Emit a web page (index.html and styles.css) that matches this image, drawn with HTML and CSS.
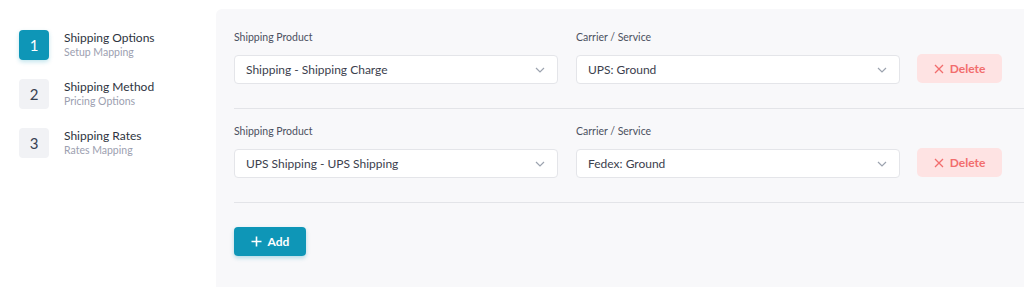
FILE: index.html
```html
<!DOCTYPE html>
<html lang="en">
<head>
    <meta charset="UTF-8">
    <meta name="viewport" content="width=device-width, initial-scale=1.0">
    <title>Shipping Options</title>
    <link rel="stylesheet" href="styles.css">
</head>
<body>
    <div class="layout">
        <!-- Steps -->
        <div class="steps">
            <div class="step active">
                <div class="step-num">1</div>
                <div class="step-text">
                    <div class="step-title">Shipping Options</div>
                    <div class="step-sub">Setup Mapping</div>
                </div>
            </div>
            <div class="step">
                <div class="step-num">2</div>
                <div class="step-text">
                    <div class="step-title">Shipping Method</div>
                    <div class="step-sub">Pricing Options</div>
                </div>
            </div>
            <div class="step">
                <div class="step-num">3</div>
                <div class="step-text">
                    <div class="step-title">Shipping Rates</div>
                    <div class="step-sub">Rates Mapping</div>
                </div>
            </div>
        </div>

        <!-- Mapping rows -->
        <div class="panel">
            <div class="map-row">
                <div class="field">
                    <label>Shipping Product</label>
                    <div class="select">
                        <span>Shipping - Shipping Charge</span>
                        <svg class="chevron" width="10" height="6" viewBox="0 0 10 6"><path d="M1 1l4 4 4-4" fill="none" stroke="#9ca3af" stroke-width="1.2"/></svg>
                    </div>
                </div>
                <div class="field">
                    <label>Carrier / Service</label>
                    <div class="select">
                        <span>UPS: Ground</span>
                        <svg class="chevron" width="10" height="6" viewBox="0 0 10 6"><path d="M1 1l4 4 4-4" fill="none" stroke="#9ca3af" stroke-width="1.2"/></svg>
                    </div>
                </div>
                <button class="btn-delete">
                    <svg width="10" height="10" viewBox="0 0 10 10"><path d="M1 1l8 8M9 1l-8 8" stroke="#f26d6d" stroke-width="1.3"/></svg>
                    Delete
                </button>
            </div>

            <div class="map-row">
                <div class="field">
                    <label>Shipping Product</label>
                    <div class="select">
                        <span>UPS Shipping - UPS Shipping</span>
                        <svg class="chevron" width="10" height="6" viewBox="0 0 10 6"><path d="M1 1l4 4 4-4" fill="none" stroke="#9ca3af" stroke-width="1.2"/></svg>
                    </div>
                </div>
                <div class="field">
                    <label>Carrier / Service</label>
                    <div class="select">
                        <span>Fedex: Ground</span>
                        <svg class="chevron" width="10" height="6" viewBox="0 0 10 6"><path d="M1 1l4 4 4-4" fill="none" stroke="#9ca3af" stroke-width="1.2"/></svg>
                    </div>
                </div>
                <button class="btn-delete">
                    <svg width="10" height="10" viewBox="0 0 10 10"><path d="M1 1l8 8M9 1l-8 8" stroke="#f26d6d" stroke-width="1.3"/></svg>
                    Delete
                </button>
            </div>

            <button class="btn-add">
                <svg width="11" height="11" viewBox="0 0 11 11"><path d="M5.5 0.5v10M0.5 5.5h10" stroke="white" stroke-width="1.6"/></svg>
                Add
            </button>
        </div>
    </div>
</body>
</html>
```

FILE: styles.css
```css
* {
    margin: 0;
    padding: 0;
    box-sizing: border-box;
}

body {
    font-family: Lato, 'Noto Sans', sans-serif;
    background: white;
    color: #374151;
    height: 287px;
    overflow: hidden;
}

.layout {
    display: flex;
    height: 100%;
}

.steps {
    width: 216px;
    flex-shrink: 0;
    padding: 30px 0 0 19px;
    display: flex;
    flex-direction: column;
    gap: 19px;
}

.step {
    display: flex;
    align-items: flex-start;
    gap: 15px;
    height: 30px;
}

.step-num {
    width: 30px;
    height: 30px;
    border-radius: 4px;
    background: #f1f2f5;
    color: #374151;
    font-size: 15px;
    display: flex;
    align-items: center;
    justify-content: center;
}

.step.active .step-num {
    background: #0e96b7;
    color: white;
    box-shadow: 0 2px 4px rgba(14, 150, 183, 0.25);
}

.step-title {
    font-size: 12px;
    line-height: 15px;
    color: #2d3340;
}

.step-sub {
    font-size: 10.5px;
    line-height: 14px;
    color: #9ca0b0;
}

.panel {
    flex: 1;
    margin-top: 9px;
    background: #f8f8fa;
    border-top-left-radius: 6px;
    padding: 6px 0 0 18px;
}

.map-row {
    display: flex;
    align-items: flex-end;
    gap: 18px;
    padding: 15px 22px 24px 0;
    border-bottom: 1px solid #e3e4e8;
}

.field {
    width: 324px;
}

label {
    display: block;
    font-size: 10.5px;
    line-height: 14px;
    color: #4b5060;
    margin-bottom: 11px;
}

.select {
    height: 29px;
    background: white;
    border: 1px solid #e4e5e9;
    border-radius: 4px;
    padding: 0 12px 0 11px;
    display: flex;
    align-items: center;
    justify-content: space-between;
    font-size: 12px;
    color: #3b404d;
}

.chevron {
    margin-top: 1px;
}

.btn-delete {
    width: 85px;
    height: 29px;
    margin: 0 0 1px -1px;
    border: none;
    border-radius: 5px;
    background: #fee3e3;
    color: #f26d6d;
    font-family: inherit;
    font-size: 12px;
    font-weight: 700;
    display: flex;
    align-items: center;
    justify-content: center;
    gap: 6px;
}

.btn-add {
    margin-top: 24px;
    width: 72px;
    height: 29px;
    border: none;
    border-radius: 4px;
    background: #0e96b7;
    color: white;
    font-family: inherit;
    font-size: 12px;
    font-weight: 700;
    display: flex;
    align-items: center;
    justify-content: center;
    gap: 6px;
    box-shadow: 0 2px 4px rgba(14, 150, 183, 0.3);
}
```
